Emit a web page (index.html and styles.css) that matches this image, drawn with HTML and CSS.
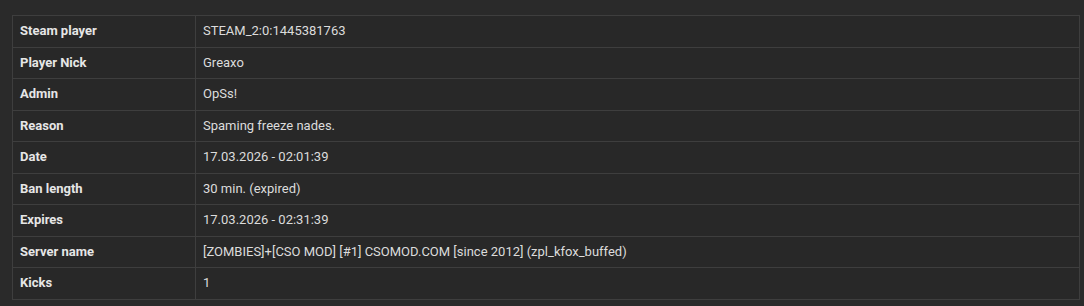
FILE: index.html
```html
<!DOCTYPE html>
<html>
<head>
<meta charset="utf-8">
<link rel="stylesheet" href="styles.css">
</head>
<body>
<div class="wrap">
<table class="info">
<tbody>
<tr><th>Steam player</th><td>STEAM_2:0:1445381763</td></tr>
<tr><th>Player Nick</th><td>Greaxo</td></tr>
<tr><th>Admin</th><td>OpSs!</td></tr>
<tr><th>Reason</th><td>Spaming freeze nades.</td></tr>
<tr><th>Date</th><td>17.03.2026 - 02:01:39</td></tr>
<tr><th>Ban length</th><td>30 min. (expired)</td></tr>
<tr><th>Expires</th><td>17.03.2026 - 02:31:39</td></tr>
<tr><th>Server name</th><td>[ZOMBIES]+[CSO MOD] [#1] CSOMOD.COM [since 2012] (zpl_kfox_buffed)</td></tr>
<tr><th>Kicks</th><td>1</td></tr>
</tbody>
</table>
</div>
</body>
</html>
```
FILE: styles.css
```css
html, body {
  margin: 0;
  padding: 0;
  background: #2a2a2a;
}
.wrap {
  padding: 15px 4px 0 12px;
}
.info {
  width: 1068px;
  border-collapse: collapse;
  font-family: Roboto, "Liberation Sans", sans-serif;
  font-size: 13px;
  color: #dcdcdc;
  background: #282828;
  border: 1px solid #444;
}
.info th, .info td {
  border: 1px solid #3e3e3e;
  padding: 6px 7px;
  line-height: 18.5px;
  text-align: left;
  vertical-align: middle;
}
.info th {
  width: 168px;
  font-weight: 700;
  color: #e6e6e6;
}
```
